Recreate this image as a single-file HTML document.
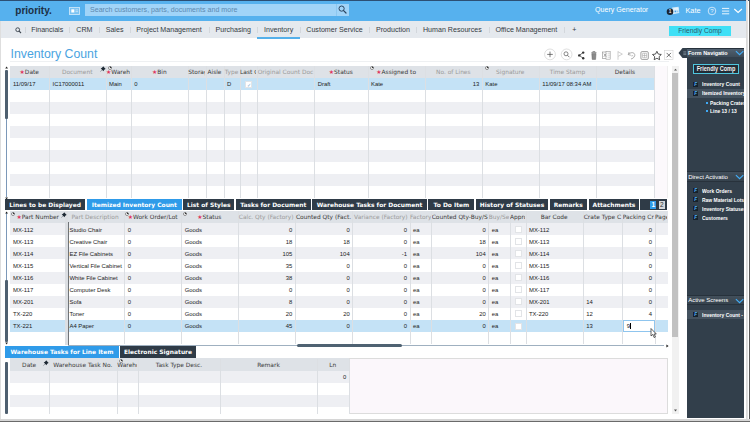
<!DOCTYPE html>
<html><head><meta charset="utf-8"><title>Inventory Count</title>
<style>
*{box-sizing:border-box;margin:0;padding:0}
html,body{width:750px;height:422px;overflow:hidden;background:#fff;font-family:"Liberation Sans",sans-serif;}
body{position:relative}
.a{position:absolute}
.navi{position:absolute;top:25px;font-size:7.1px;color:#343b43;white-space:nowrap;line-height:10px}
.sep{position:absolute;top:27px;width:1px;height:5.8px;background:#d3d7dc}
.th{position:absolute;font-family:"DejaVu Sans",sans-serif;font-size:5.9px;line-height:12px;height:12px;white-space:nowrap;overflow:hidden;text-align:center;color:#3a3a3a}
.th.g{color:#9a9a9a}
.th i{font-style:normal;color:#e0345c}
.td{position:absolute;font-size:5.9px;line-height:12px;height:12px;color:#1c1c1c;white-space:nowrap;overflow:hidden;padding:0 3px}
.td.r{text-align:right;padding-right:2px}
.row{position:absolute;height:12px}
.vl{position:absolute;width:1px;background:#dcdfe3}
.tab{position:absolute;font-family:"DejaVu Sans",sans-serif;font-weight:bold;font-size:5.95px;line-height:10.5px;height:10.5px;color:#fff;background:#2f3b47;white-space:nowrap;text-align:center;overflow:hidden}
.tab.on{background:#2f9be9}
.pn{position:absolute;font-size:5.5px;line-height:8px;color:#fff;white-space:nowrap;font-weight:bold;overflow:hidden;transform:scaleX(0.9);transform-origin:0 0}
.ph{position:absolute;left:687px;width:57px;height:9.5px;background:linear-gradient(#506070,#3e4c59);border-top:0.6px solid #27323c;color:#fff;font-size:6.5px;line-height:9.5px;font-weight:bold;white-space:nowrap;overflow:hidden}
.ph span{display:block;transform-origin:0 0;padding-left:1.2px}
.fi{position:absolute;width:5px;height:5px;background:#18222c;border:0.4px solid #3a4c5e;color:#5fb4f0;font-size:4px;line-height:4px;font-weight:bold;font-style:italic;text-align:center}
.cb{position:absolute;width:7px;height:7px;border:0.6px solid #e2e4e7;background:#fff}
</style></head><body>
<div class="a" style="left:0;top:0;width:746px;height:21px;background:#56b1ee"></div>
<div class="a" style="left:0;top:0;width:750px;height:1px;background:#2c4f74"></div>
<div class="a" style="left:0;top:21px;width:746px;height:17px;background:#e5e9ee"></div>
<div class="a" style="left:745.8px;top:0;width:2px;height:422px;background:linear-gradient(90deg,#e6e6e6,#cfcfcf,#f4f4f4)"></div>
<div class="a" style="left:748.8px;top:0;width:2px;height:422px;background:#5a5a5a"></div>
<div class="a" style="left:0;top:21px;width:0.7px;height:400px;background:#dedede"></div>
<div class="a" style="left:0;top:419px;width:750px;height:1.5px;background:#d6d6d6"></div>
<div class="a" style="left:0;top:420.5px;width:750px;height:2px;background:#6a6a6a"></div>
<div class="a" style="left:15.3px;top:3.6px;font-size:10px;line-height:14px;font-weight:bold;color:#1c2f44">priority.</div>
<svg class="a" style="left:69px;top:7px" width="11" height="8" viewBox="0 0 11 8"><rect x="0.5" y="0.5" width="10" height="7" fill="#7cc3f2" stroke="#c9e6fa" stroke-width="0.9"/><rect x="2.3" y="2.3" width="3" height="3.2" fill="#fff"/><rect x="6.5" y="2.5" width="2.5" height="0.8" fill="#cfe8fa"/><rect x="6.5" y="4.3" width="2.5" height="0.8" fill="#cfe8fa"/></svg>
<div class="a" style="left:84.6px;top:3.7px;width:264.4px;height:12.5px;background:#a1d4f8"></div>
<div class="a" style="left:335.5px;top:3.5px;width:1px;height:12.5px;background:#8cc7f0"></div>
<div class="a" style="left:90px;top:4px;font-size:7.1px;line-height:12px;color:#5d89b0;white-space:nowrap">Search customers, parts, documents and more</div>
<svg class="a" style="left:338px;top:5px" width="9" height="9" viewBox="0 0 9 9"><circle cx="3.6" cy="3.6" r="2.6" fill="none" stroke="#2b4560" stroke-width="1"/><path d="M5.6 5.6L8 8" stroke="#2b4560" stroke-width="1.2" stroke-linecap="round"/></svg>
<div class="a" style="left:595px;top:5px;font-size:7.1px;line-height:10px;color:#fff;white-space:nowrap">Query Generator</div>
<div class="a" style="left:685.5px;top:6px;font-size:7.3px;line-height:10px;color:#fff;white-space:nowrap">Kate</div>
<svg class="a" style="left:665px;top:5px" width="16" height="11" viewBox="665 5 16 11"><path d="M672.2 7.6L678.6 6.7L679.3 13L673 14.3Z" fill="#d2ebfb"/><rect x="674" y="8.4" width="4.4" height="1" fill="#f2f9fe"/><rect x="674.6" y="10.6" width="1.6" height="1.6" fill="#3f9ee6"/><rect x="676.8" y="10.6" width="1.6" height="1.6" fill="#8cc8f3"/><circle cx="670" cy="11.7" r="3.3" fill="#1b2530"/><text x="670" y="13.4" font-size="4.6" font-weight="bold" fill="#e8e8f0" text-anchor="middle" font-family="Liberation Sans, sans-serif">1</text></svg>
<svg class="a" style="left:706px;top:5px" width="40" height="12" viewBox="0 0 40 12"><circle cx="6" cy="6" r="3.8" fill="none" stroke="#e6f3fd" stroke-width="0.8"/><text x="6" y="8.1" font-size="6" fill="#e6f3fd" text-anchor="middle" font-family="Liberation Sans, sans-serif">?</text><path d="M16 3.4h7.2M16 6.1h7.2M16 8.8h7.2" stroke="#eaf5fd" stroke-width="1"/><path d="M28.3 4l3.8 3.4l3.8-3.4" fill="none" stroke="#fff" stroke-width="1.1"/></svg>
<svg class="a" style="left:14.5px;top:27.2px" width="7" height="7" viewBox="0 0 7 7"><circle cx="2.7" cy="2.7" r="1.9" fill="none" stroke="#3d4650" stroke-width="0.95"/><path d="M4.1 4.1L6 6" stroke="#3d4650" stroke-width="1.1"/></svg>
<div class="navi" style="left:31.3px">Financials</div>
<div class="navi" style="left:76.3px">CRM</div>
<div class="navi" style="left:105.7px">Sales</div>
<div class="navi" style="left:136.3px">Project Management</div>
<div class="navi" style="left:215.5px">Purchasing</div>
<div class="navi" style="left:264px">Inventory</div>
<div class="navi" style="left:306.3px">Customer Service</div>
<div class="navi" style="left:376px">Production</div>
<div class="navi" style="left:423px">Human Resources</div>
<div class="navi" style="left:495.5px">Office Management</div>
<div class="navi" style="left:572.3px">+</div>
<div class="sep" style="left:25.3px"></div>
<div class="sep" style="left:69.3px"></div>
<div class="sep" style="left:99px"></div>
<div class="sep" style="left:129.7px"></div>
<div class="sep" style="left:209px"></div>
<div class="sep" style="left:257px"></div>
<div class="sep" style="left:299.7px"></div>
<div class="sep" style="left:369.3px"></div>
<div class="sep" style="left:416.3px"></div>
<div class="sep" style="left:488.7px"></div>
<div class="sep" style="left:563.7px"></div>
<div class="a" style="left:257.3px;top:37px;width:42.5px;height:1.5px;background:#55b0ea"></div>
<div class="a" style="left:669px;top:25.5px;width:62px;height:10.5px;background:#3fe0f6;color:#2c5a6a;font-size:6.7px;line-height:10.5px;text-align:center">Friendly Comp</div>
<div class="a" style="left:10.5px;top:45px;font-size:12.3px;line-height:18px;color:#4aa3df;white-space:nowrap">Inventory Count</div>
<svg class="a" style="left:540px;top:46px" width="140" height="17" viewBox="540 46 140 17"><circle cx="550" cy="54.4" r="5.4" fill="#fff" stroke="#c9c9c9" stroke-width="0.6"/><path d="M547.2 54.4h5.6M550 51.6v5.6" stroke="#444" stroke-width="0.7"/><circle cx="566.6" cy="54.4" r="5.4" fill="#fff" stroke="#c9c9c9" stroke-width="0.6"/><circle cx="566" cy="53.8" r="2" fill="none" stroke="#555" stroke-width="0.7"/><path d="M567.5 55.3l1.9 1.9" stroke="#555" stroke-width="0.8"/><path d="M583 52.6L579.3 55.4L583 58.2" fill="none" stroke="#333" stroke-width="0.7"/><circle cx="583.2" cy="52.6" r="1.2" fill="#333"/><circle cx="579.2" cy="55.4" r="1.2" fill="#333"/><circle cx="583.2" cy="58.2" r="1.2" fill="#333"/><path d="M591.3 52.7h5.2M592.8 52.5v-0.9h2.2v0.9" fill="none" stroke="#666" stroke-width="0.7"/><path d="M591.8 53.6h4.2l-0.4 5.8h-3.4z" fill="#8a8a8a" stroke="#666" stroke-width="0.5"/><rect x="602.6" y="52" width="5" height="6.4" fill="#fff" stroke="#8a8a8a" stroke-width="0.6"/><rect x="606" y="51.4" width="4.2" height="7.8" fill="#fff" stroke="#9a9a9a" stroke-width="0.6"/><path d="M603.8 53.6l2.4 3.2M606.2 53.6l-2.4 3.2" stroke="#777" stroke-width="0.6"/><path d="M607.6 53.2h2.4M607.6 55.2h2.4M607.6 57.2h2.4" stroke="#aaa" stroke-width="0.5"/><path d="M618 51.2v8.6M618 51.8l4.4 2.3l-4.4 2.3" fill="none" stroke="#bdbdbd" stroke-width="0.7"/><path d="M629.2 52l-1 2.6l2.6 0.6" fill="none" stroke="#888" stroke-width="0.7"/><path d="M628.6 54.4c1.6-2 4.6-2.4 5.8-0.6c1.2 1.9-0.4 4.4-3.4 5.2" fill="none" stroke="#888" stroke-width="0.7"/><path d="M631.2 56.2c0.8-1 2-0.8 2 0.2" fill="none" stroke="#999" stroke-width="0.6"/><rect x="640.9" y="51.6" width="7.4" height="7.8" rx="1.2" fill="#fff" stroke="#777" stroke-width="0.7"/><path d="M642.6 53.3h4v4.4h-4zM644.6 53.3v4.4M642.6 55.5h4" fill="none" stroke="#999" stroke-width="0.5"/><path d="M656.9 51.3l1.35 2.75l3.05 0.45l-2.2 2.15l0.5 3.05l-2.7-1.45l-2.7 1.45l0.5-3.05l-2.2-2.15l3.05-0.45z" fill="#fff" stroke="#222" stroke-width="0.75" stroke-linejoin="round"/><rect x="664.6" y="50.6" width="8.4" height="9" fill="#fff" stroke="#cfcfcf" stroke-width="0.6"/><path d="M666.6 52.9l4.4 4.4M671 52.9l-4.4 4.4" stroke="#333" stroke-width="0.7"/></svg>
<div class="a" style="left:10px;top:61.2px;width:659px;height:1px;background:#eef0f2"></div>
<div class="a" style="left:654.3px;top:65.6px;width:14px;height:132.4px;background:#fcf9fc;border-right:0.6px solid #efefef"></div>
<div class="a" style="left:10px;top:65.6px;width:644.3px;height:12.4px;background:#dee2e7"></div>
<div class="row" style="left:10px;top:78.00px;width:644.3px;height:12px;background:#c4e2f6"></div>
<div class="row" style="left:10px;top:102.00px;width:644.3px;height:12px;background:#eeeff3"></div>
<div class="row" style="left:10px;top:126.00px;width:644.3px;height:12px;background:#eeeff3"></div>
<div class="row" style="left:10px;top:150.00px;width:644.3px;height:12px;background:#eeeff3"></div>
<div class="row" style="left:10px;top:174.00px;width:644.3px;height:12px;background:#eeeff3"></div>
<div class="vl" style="left:49.0px;top:66px;height:132px"></div>
<div class="vl" style="left:105.5px;top:66px;height:132px"></div>
<div class="vl" style="left:130.8px;top:66px;height:132px"></div>
<div class="vl" style="left:187.8px;top:66px;height:132px"></div>
<div class="vl" style="left:205.5px;top:66px;height:132px"></div>
<div class="vl" style="left:223.5px;top:66px;height:132px"></div>
<div class="vl" style="left:239.5px;top:66px;height:132px"></div>
<div class="vl" style="left:256.8px;top:66px;height:132px"></div>
<div class="vl" style="left:314.2px;top:66px;height:132px"></div>
<div class="vl" style="left:367.5px;top:66px;height:132px"></div>
<div class="vl" style="left:424.8px;top:66px;height:132px"></div>
<div class="vl" style="left:481.8px;top:66px;height:132px"></div>
<div class="vl" style="left:538.8px;top:66px;height:132px"></div>
<div class="vl" style="left:596.2px;top:66px;height:132px"></div>
<div class="vl" style="left:653.8px;top:66px;height:132px"></div>
<div class="th " style="left:10px;top:66px;width:38.5px"><i>★</i>Date</div>
<div class="th g" style="left:49.5px;top:66px;width:55.5px">Document</div>
<div class="th " style="left:106px;top:66px;width:24.30000000000001px"><i>★</i>Warehouse</div>
<div class="th " style="left:131.3px;top:66px;width:56.0px"><i>★</i>Bin</div>
<div class="th " style="left:188.3px;top:66px;width:16.69999999999999px">Storage</div>
<div class="th " style="left:206px;top:66px;width:17px">Aisle</div>
<div class="th g" style="left:224px;top:66px;width:15px">Type</div>
<div class="th " style="left:240px;top:66px;width:16.30000000000001px">Last Count</div>
<div class="th g" style="left:257.3px;top:66px;width:56.39999999999998px">Original Count Doc</div>
<div class="th " style="left:314.7px;top:66px;width:52.30000000000001px"><i>★</i>Status</div>
<div class="th " style="left:368px;top:66px;width:56.30000000000001px"><i>★</i>Assigned to</div>
<div class="th g" style="left:425.3px;top:66px;width:56.0px">No. of Lines</div>
<div class="th g" style="left:482.3px;top:66px;width:55.99999999999994px">Signature</div>
<div class="th g" style="left:539.3px;top:66px;width:56.40000000000009px">Time Stamp</div>
<div class="th " style="left:596.7px;top:66px;width:56.59999999999991px">Details</div>
<div class="td" style="left:10px;top:78px;width:38.5px">11/09/17</div>
<div class="td" style="left:49.5px;top:78px;width:55.5px">IC17000011</div>
<div class="td" style="left:106px;top:78px;width:24.30000000000001px">Main</div>
<div class="td" style="left:131.3px;top:78px;width:56.0px">0</div>
<div class="td" style="left:224px;top:78px;width:15px">D</div>
<div class="td" style="left:314.7px;top:78px;width:52.30000000000001px">Draft</div>
<div class="td" style="left:368px;top:78px;width:56.30000000000001px">Kate</div>
<div class="td r" style="left:425.3px;top:78px;width:56.0px">13</div>
<div class="td" style="left:482.3px;top:78px;width:55.99999999999994px">Kate</div>
<div class="td" style="left:539.3px;top:78px;width:56.40000000000009px">11/09/17 08:34 AM</div>
<div class="cb" style="left:245px;top:80.5px;color:#7aa7d0;font-size:5px;line-height:6px;text-align:center">✓</div>
<div class="a" style="left:5px;top:70px;width:2.7px;height:49px;background:#4f6070;border-radius:1px"></div>
<div class="a" style="left:6px;top:119px;width:0.8px;height:78px;background:#7c98b8"></div>
<div class="tab" style="left:5.3px;top:199px;width:79.7px;height:11px;line-height:11px">Lines to be Displayed</div>
<div class="tab on" style="left:86.7px;top:199px;width:95.3px;height:11px;line-height:11px">Itemized Inventory Count</div>
<div class="tab" style="left:183.2px;top:199px;width:51.20000000000002px;height:11px;line-height:11px">List of Styles</div>
<div class="tab" style="left:235.8px;top:199px;width:74.80000000000001px;height:11px;line-height:11px">Tasks for Document</div>
<div class="tab" style="left:312.4px;top:199px;width:114.20000000000005px;height:11px;line-height:11px">Warehouse Tasks for Document</div>
<div class="tab" style="left:428.4px;top:199px;width:46.0px;height:11px;line-height:11px">To Do Item</div>
<div class="tab" style="left:476px;top:199px;width:72px;height:11px;line-height:11px">History of Statuses</div>
<div class="tab" style="left:549.6px;top:199px;width:37.299999999999955px;height:11px;line-height:11px">Remarks</div>
<div class="tab" style="left:588.9px;top:199px;width:50.200000000000045px;height:11px;line-height:11px">Attachments</div>
<div class="a" style="left:640.4px;top:199px;width:26.4px;height:11px;background:#2f3b47"></div>
<div class="a" style="left:650px;top:200.6px;width:6.4px;height:8px;background:#2f9be9;color:#fff;font-size:6.5px;line-height:8px;text-align:center;font-weight:bold">1</div>
<div class="a" style="left:658.5px;top:200.6px;width:6.7px;height:8px;background:#d5d8db;color:#333;font-size:6.5px;line-height:8px;text-align:center">2</div>
<div class="a" style="left:10px;top:210.7px;width:658.3px;height:12.6px;background:#dee2e7"></div>
<div class="row" style="left:10px;top:223.30px;width:658.3px;height:12.05px;background:#eeeff3"></div>
<div class="row" style="left:10px;top:247.40px;width:658.3px;height:12.05px;background:#eeeff3"></div>
<div class="row" style="left:10px;top:271.50px;width:658.3px;height:12.05px;background:#eeeff3"></div>
<div class="row" style="left:10px;top:295.60px;width:658.3px;height:12.05px;background:#eeeff3"></div>
<div class="row" style="left:10px;top:319.70px;width:658.3px;height:12.05px;background:#c4e2f6"></div>
<div class="vl" style="left:124.2px;top:211px;height:133px"></div>
<div class="vl" style="left:181.2px;top:211px;height:133px"></div>
<div class="vl" style="left:237.5px;top:211px;height:133px"></div>
<div class="vl" style="left:294.8px;top:211px;height:133px"></div>
<div class="vl" style="left:352.2px;top:211px;height:133px"></div>
<div class="vl" style="left:409.5px;top:211px;height:133px"></div>
<div class="vl" style="left:431.2px;top:211px;height:133px"></div>
<div class="vl" style="left:488.2px;top:211px;height:133px"></div>
<div class="vl" style="left:509.5px;top:211px;height:133px"></div>
<div class="vl" style="left:525.5px;top:211px;height:133px"></div>
<div class="vl" style="left:582.8px;top:211px;height:133px"></div>
<div class="vl" style="left:622.2px;top:211px;height:133px"></div>
<div class="vl" style="left:654.5px;top:211px;height:133px"></div>
<div class="a" style="left:65.3px;top:210.7px;width:2.4px;height:134.6px;background:#dcdfe3"></div>
<div class="a" style="left:67.5px;top:222px;width:1px;height:123.3px;background:#707478"></div>
<div class="th " style="left:10px;top:211.2px;width:55.5px"><i>★</i>Part Number</div>
<div class="th g" style="left:66.5px;top:211.2px;width:57.2px">Part Description</div>
<div class="th " style="left:124.7px;top:211.2px;width:55.999999999999986px"><i>★</i>Work Order/Lot</div>
<div class="th " style="left:181.7px;top:211.2px;width:55.30000000000001px"><i>★</i>Status</div>
<div class="th g" style="left:238px;top:211.2px;width:56.30000000000001px">Calc. Qty (Factory)</div>
<div class="th " style="left:295.3px;top:211.2px;width:56.39999999999998px">Counted Qty (Fact.</div>
<div class="th g" style="left:352.7px;top:211.2px;width:56.30000000000001px">Variance (Factory)</div>
<div class="th g" style="left:410px;top:211.2px;width:20.69999999999999px">Factory</div>
<div class="th " style="left:431.7px;top:211.2px;width:56.0px">Counted Qty-Buy/S</div>
<div class="th g" style="left:488.7px;top:211.2px;width:20.30000000000001px">Buy/Se</div>
<div class="th " style="left:510px;top:211.2px;width:15px">Appro</div>
<div class="th " style="left:526px;top:211.2px;width:56.299999999999955px">Bar Code</div>
<div class="th " style="left:583.3px;top:211.2px;width:38.40000000000009px">Crate Type C</div>
<div class="th " style="left:622.7px;top:211.2px;width:31.299999999999955px">Packing Cr</div>
<div class="th " style="left:655px;top:211.2px;width:12.299999999999955px">Page</div>
<div class="td" style="left:10px;top:223.60px;width:55.5px">MX-112</div>
<div class="td" style="left:66.5px;top:223.60px;width:57.2px">Studio Chair</div>
<div class="td" style="left:124.7px;top:223.60px;width:55.999999999999986px">0</div>
<div class="td" style="left:181.7px;top:223.60px;width:55.30000000000001px">Goods</div>
<div class="td r" style="left:238px;top:223.60px;width:56.30000000000001px">0</div>
<div class="td r" style="left:295.3px;top:223.60px;width:56.39999999999998px">0</div>
<div class="td r" style="left:352.7px;top:223.60px;width:56.30000000000001px">0</div>
<div class="td" style="left:410px;top:223.60px;width:20.69999999999999px">ea</div>
<div class="td r" style="left:431.7px;top:223.60px;width:56.0px">0</div>
<div class="td" style="left:488.7px;top:223.60px;width:20.30000000000001px">ea</div>
<div class="cb" style="left:514.5px;top:226.10px"></div>
<div class="td" style="left:526px;top:223.60px;width:56.299999999999955px">MX-112</div>
<div class="td r" style="left:622.7px;top:223.60px;width:31.299999999999955px">0</div>
<div class="td" style="left:10px;top:235.65px;width:55.5px">MX-113</div>
<div class="td" style="left:66.5px;top:235.65px;width:57.2px">Creative Chair</div>
<div class="td" style="left:124.7px;top:235.65px;width:55.999999999999986px">0</div>
<div class="td" style="left:181.7px;top:235.65px;width:55.30000000000001px">Goods</div>
<div class="td r" style="left:238px;top:235.65px;width:56.30000000000001px">18</div>
<div class="td r" style="left:295.3px;top:235.65px;width:56.39999999999998px">18</div>
<div class="td r" style="left:352.7px;top:235.65px;width:56.30000000000001px">0</div>
<div class="td" style="left:410px;top:235.65px;width:20.69999999999999px">ea</div>
<div class="td r" style="left:431.7px;top:235.65px;width:56.0px">18</div>
<div class="td" style="left:488.7px;top:235.65px;width:20.30000000000001px">ea</div>
<div class="cb" style="left:514.5px;top:238.15px"></div>
<div class="td" style="left:526px;top:235.65px;width:56.299999999999955px">MX-113</div>
<div class="td r" style="left:622.7px;top:235.65px;width:31.299999999999955px">0</div>
<div class="td" style="left:10px;top:247.70px;width:55.5px">MX-114</div>
<div class="td" style="left:66.5px;top:247.70px;width:57.2px">EZ File Cabinets</div>
<div class="td" style="left:124.7px;top:247.70px;width:55.999999999999986px">0</div>
<div class="td" style="left:181.7px;top:247.70px;width:55.30000000000001px">Goods</div>
<div class="td r" style="left:238px;top:247.70px;width:56.30000000000001px">105</div>
<div class="td r" style="left:295.3px;top:247.70px;width:56.39999999999998px">104</div>
<div class="td r" style="left:352.7px;top:247.70px;width:56.30000000000001px">-1</div>
<div class="td" style="left:410px;top:247.70px;width:20.69999999999999px">ea</div>
<div class="td r" style="left:431.7px;top:247.70px;width:56.0px">104</div>
<div class="td" style="left:488.7px;top:247.70px;width:20.30000000000001px">ea</div>
<div class="cb" style="left:514.5px;top:250.20px"></div>
<div class="td" style="left:526px;top:247.70px;width:56.299999999999955px">MX-114</div>
<div class="td r" style="left:622.7px;top:247.70px;width:31.299999999999955px">0</div>
<div class="td" style="left:10px;top:259.75px;width:55.5px">MX-115</div>
<div class="td" style="left:66.5px;top:259.75px;width:57.2px">Vertical File Cabinet</div>
<div class="td" style="left:124.7px;top:259.75px;width:55.999999999999986px">0</div>
<div class="td" style="left:181.7px;top:259.75px;width:55.30000000000001px">Goods</div>
<div class="td r" style="left:238px;top:259.75px;width:56.30000000000001px">35</div>
<div class="td r" style="left:295.3px;top:259.75px;width:56.39999999999998px">0</div>
<div class="td r" style="left:352.7px;top:259.75px;width:56.30000000000001px">0</div>
<div class="td" style="left:410px;top:259.75px;width:20.69999999999999px">ea</div>
<div class="td r" style="left:431.7px;top:259.75px;width:56.0px">0</div>
<div class="td" style="left:488.7px;top:259.75px;width:20.30000000000001px">ea</div>
<div class="cb" style="left:514.5px;top:262.25px"></div>
<div class="td" style="left:526px;top:259.75px;width:56.299999999999955px">MX-115</div>
<div class="td r" style="left:622.7px;top:259.75px;width:31.299999999999955px">0</div>
<div class="td" style="left:10px;top:271.80px;width:55.5px">MX-116</div>
<div class="td" style="left:66.5px;top:271.80px;width:57.2px">White File Cabinet</div>
<div class="td" style="left:124.7px;top:271.80px;width:55.999999999999986px">0</div>
<div class="td" style="left:181.7px;top:271.80px;width:55.30000000000001px">Goods</div>
<div class="td r" style="left:238px;top:271.80px;width:56.30000000000001px">38</div>
<div class="td r" style="left:295.3px;top:271.80px;width:56.39999999999998px">0</div>
<div class="td r" style="left:352.7px;top:271.80px;width:56.30000000000001px">0</div>
<div class="td" style="left:410px;top:271.80px;width:20.69999999999999px">ea</div>
<div class="td r" style="left:431.7px;top:271.80px;width:56.0px">0</div>
<div class="td" style="left:488.7px;top:271.80px;width:20.30000000000001px">ea</div>
<div class="cb" style="left:514.5px;top:274.30px"></div>
<div class="td" style="left:526px;top:271.80px;width:56.299999999999955px">MX-116</div>
<div class="td r" style="left:622.7px;top:271.80px;width:31.299999999999955px">0</div>
<div class="td" style="left:10px;top:283.85px;width:55.5px">MX-117</div>
<div class="td" style="left:66.5px;top:283.85px;width:57.2px">Computer Desk</div>
<div class="td" style="left:124.7px;top:283.85px;width:55.999999999999986px">0</div>
<div class="td" style="left:181.7px;top:283.85px;width:55.30000000000001px">Goods</div>
<div class="td r" style="left:238px;top:283.85px;width:56.30000000000001px">0</div>
<div class="td r" style="left:295.3px;top:283.85px;width:56.39999999999998px">0</div>
<div class="td r" style="left:352.7px;top:283.85px;width:56.30000000000001px">0</div>
<div class="td" style="left:410px;top:283.85px;width:20.69999999999999px">ea</div>
<div class="td r" style="left:431.7px;top:283.85px;width:56.0px">0</div>
<div class="td" style="left:488.7px;top:283.85px;width:20.30000000000001px">ea</div>
<div class="cb" style="left:514.5px;top:286.35px"></div>
<div class="td" style="left:526px;top:283.85px;width:56.299999999999955px">MX-117</div>
<div class="td r" style="left:622.7px;top:283.85px;width:31.299999999999955px">0</div>
<div class="td" style="left:10px;top:295.90px;width:55.5px">MX-201</div>
<div class="td" style="left:66.5px;top:295.90px;width:57.2px">Sofa</div>
<div class="td" style="left:124.7px;top:295.90px;width:55.999999999999986px">0</div>
<div class="td" style="left:181.7px;top:295.90px;width:55.30000000000001px">Goods</div>
<div class="td r" style="left:238px;top:295.90px;width:56.30000000000001px">8</div>
<div class="td r" style="left:295.3px;top:295.90px;width:56.39999999999998px">0</div>
<div class="td r" style="left:352.7px;top:295.90px;width:56.30000000000001px">0</div>
<div class="td" style="left:410px;top:295.90px;width:20.69999999999999px">ea</div>
<div class="td r" style="left:431.7px;top:295.90px;width:56.0px">0</div>
<div class="td" style="left:488.7px;top:295.90px;width:20.30000000000001px">ea</div>
<div class="cb" style="left:514.5px;top:298.40px"></div>
<div class="td" style="left:526px;top:295.90px;width:56.299999999999955px">MX-201</div>
<div class="td" style="left:583.3px;top:295.90px;width:38.40000000000009px">14</div>
<div class="td r" style="left:622.7px;top:295.90px;width:31.299999999999955px">0</div>
<div class="td" style="left:10px;top:307.95px;width:55.5px">TX-220</div>
<div class="td" style="left:66.5px;top:307.95px;width:57.2px">Toner</div>
<div class="td" style="left:124.7px;top:307.95px;width:55.999999999999986px">0</div>
<div class="td" style="left:181.7px;top:307.95px;width:55.30000000000001px">Goods</div>
<div class="td r" style="left:238px;top:307.95px;width:56.30000000000001px">20</div>
<div class="td r" style="left:295.3px;top:307.95px;width:56.39999999999998px">20</div>
<div class="td r" style="left:352.7px;top:307.95px;width:56.30000000000001px">0</div>
<div class="td" style="left:410px;top:307.95px;width:20.69999999999999px">ea</div>
<div class="td r" style="left:431.7px;top:307.95px;width:56.0px">20</div>
<div class="td" style="left:488.7px;top:307.95px;width:20.30000000000001px">ea</div>
<div class="cb" style="left:514.5px;top:310.45px"></div>
<div class="td" style="left:526px;top:307.95px;width:56.299999999999955px">TX-220</div>
<div class="td" style="left:583.3px;top:307.95px;width:38.40000000000009px">12</div>
<div class="td r" style="left:622.7px;top:307.95px;width:31.299999999999955px">4</div>
<div class="td" style="left:10px;top:320.00px;width:55.5px">TX-221</div>
<div class="td" style="left:66.5px;top:320.00px;width:57.2px">A4 Paper</div>
<div class="td" style="left:124.7px;top:320.00px;width:55.999999999999986px">0</div>
<div class="td" style="left:181.7px;top:320.00px;width:55.30000000000001px">Goods</div>
<div class="td r" style="left:238px;top:320.00px;width:56.30000000000001px">45</div>
<div class="td r" style="left:295.3px;top:320.00px;width:56.39999999999998px">0</div>
<div class="td r" style="left:352.7px;top:320.00px;width:56.30000000000001px">0</div>
<div class="td" style="left:410px;top:320.00px;width:20.69999999999999px">ea</div>
<div class="td r" style="left:431.7px;top:320.00px;width:56.0px">0</div>
<div class="td" style="left:488.7px;top:320.00px;width:20.30000000000001px">ea</div>
<div class="cb" style="left:514.5px;top:322.50px"></div>
<div class="td" style="left:583.3px;top:320.00px;width:38.40000000000009px">13</div>
<div class="a" style="left:623px;top:320px;width:31.7px;height:11.7px;background:#fff;border:0.7px solid #8fc5ee;font-size:6.1px;line-height:10.5px;padding-left:2.8px;color:#111">9<span style="display:inline-block;width:0.7px;height:6px;background:#000;vertical-align:-1px"></span></div>
<svg class="a" style="left:650px;top:328px" width="8" height="11" viewBox="0 0 8 11"><path d="M1 0.5L1 8L2.8 6.4L4.2 9.6L5.4 9L4 6L6.3 6Z" fill="#fff" stroke="#222" stroke-width="0.7"/></svg>
<div class="a" style="left:6px;top:212px;width:0.8px;height:75px;background:#7c98b8"></div>
<div class="a" style="left:5px;top:280px;width:2.7px;height:62px;background:#4f6070;border-radius:1px"></div>
<div class="a" style="left:68px;top:345.2px;width:596px;height:0.8px;background:#9fb0c0"></div>
<div class="a" style="left:296.7px;top:344.3px;width:105px;height:3px;background:#4f6272;border-radius:1.5px"></div>
<svg class="a" style="left:665.5px;top:343.6px" width="3" height="4" viewBox="0 0 3 4"><path d="M0.4 0.4L2.6 2L0.4 3.6Z" fill="#222"/></svg>
<div class="tab on" style="left:5.3px;top:346px;width:113.4px;height:11.7px;line-height:11.7px">Warehouse Tasks for Line Item</div>
<div class="tab" style="left:120px;top:346px;width:76px;height:11.7px;line-height:11.7px">Electronic Signature</div>
<div class="a" style="left:10px;top:357.7px;width:658.3px;height:56px;background:#fbf7fb;border:0.6px solid #dcdcdc"></div>
<div class="a" style="left:10px;top:371px;width:339.3px;height:43px;background:#fff"></div>
<div class="a" style="left:10px;top:357.7px;width:339.3px;height:13px;background:#dee2e7"></div>
<div class="row" style="left:10px;top:370.70px;width:339.3px;height:12px;background:#eeeff3"></div>
<div class="row" style="left:10px;top:394.70px;width:339.3px;height:12px;background:#eeeff3"></div>
<div class="vl" style="left:48.8px;top:359px;height:55px"></div>
<div class="vl" style="left:116.8px;top:359px;height:55px"></div>
<div class="vl" style="left:137.8px;top:359px;height:55px"></div>
<div class="vl" style="left:220.2px;top:359px;height:55px"></div>
<div class="vl" style="left:316.8px;top:359px;height:55px"></div>
<div class="vl" style="left:348.8px;top:359px;height:55px"></div>
<div class="th " style="left:10px;top:358.8px;width:38.3px">Date</div>
<div class="th " style="left:49.3px;top:358.8px;width:67.0px">Warehouse Task No.</div>
<div class="th " style="left:117.3px;top:358.8px;width:20.000000000000014px">Warehouse</div>
<div class="th " style="left:138.3px;top:358.8px;width:81.39999999999998px">Task Type Desc.</div>
<div class="th " style="left:220.7px;top:358.8px;width:95.60000000000002px">Remark</div>
<div class="th " style="left:317.3px;top:358.8px;width:31.0px">Ln</div>
<div class="td r" style="left:317.3px;top:370.80px;width:31.0px">0</div>
<div class="a" style="left:5px;top:362px;width:2.7px;height:52px;background:#4f6070;border-radius:1px"></div>
<svg class="a" style="left:99.5px;top:66.2px" width="6" height="6" viewBox="0 0 6 6"><path d="M3.1 0.3L5.7 2.9L4.9 3.2L3.9 4.3L3.6 5.3L2.2 3.9L0.4 5.7L0.3 5.6L2.1 3.8L0.7 2.4L1.7 2.1L2.8 1.1Z" fill="#1c2833"/></svg>
<svg class="a" style="left:60.5px;top:211.5px" width="6" height="6" viewBox="0 0 6 6"><path d="M3.1 0.3L5.7 2.9L4.9 3.2L3.9 4.3L3.6 5.3L2.2 3.9L0.4 5.7L0.3 5.6L2.1 3.8L0.7 2.4L1.7 2.1L2.8 1.1Z" fill="#1c2833"/></svg>
<svg class="a" style="left:42.7px;top:359.8px" width="6" height="6" viewBox="0 0 6 6"><path d="M3.1 0.3L5.7 2.9L4.9 3.2L3.9 4.3L3.6 5.3L2.2 3.9L0.4 5.7L0.3 5.6L2.1 3.8L0.7 2.4L1.7 2.1L2.8 1.1Z" fill="#1c2833"/></svg>
<svg class="a" style="left:107.7px;top:65.9px" width="4" height="4" viewBox="0 0 4 4"><circle cx="2" cy="2" r="1.5" fill="#fff" stroke="#333" stroke-width="0.5"/><path d="M2 0.5A1.5 1.5 0 0 1 3.5 2L2 2Z" fill="#333"/></svg>
<svg class="a" style="left:370.3px;top:65.9px" width="4" height="4" viewBox="0 0 4 4"><circle cx="2" cy="2" r="1.5" fill="#fff" stroke="#333" stroke-width="0.5"/><path d="M2 0.5A1.5 1.5 0 0 1 3.5 2L2 2Z" fill="#333"/></svg>
<svg class="a" style="left:484.8px;top:65.9px" width="4" height="4" viewBox="0 0 4 4"><circle cx="2" cy="2" r="1.5" fill="#fff" stroke="#333" stroke-width="0.5"/><path d="M2 0.5A1.5 1.5 0 0 1 3.5 2L2 2Z" fill="#333"/></svg>
<svg class="a" style="left:11.2px;top:212.2px" width="4" height="4" viewBox="0 0 4 4"><circle cx="2" cy="2" r="1.5" fill="#fff" stroke="#333" stroke-width="0.5"/><path d="M2 0.5A1.5 1.5 0 0 1 3.5 2L2 2Z" fill="#333"/></svg>
<svg class="a" style="left:125.3px;top:212.2px" width="4" height="4" viewBox="0 0 4 4"><circle cx="2" cy="2" r="1.5" fill="#fff" stroke="#333" stroke-width="0.5"/><path d="M2 0.5A1.5 1.5 0 0 1 3.5 2L2 2Z" fill="#333"/></svg>
<svg class="a" style="left:182.6px;top:212.2px" width="4" height="4" viewBox="0 0 4 4"><circle cx="2" cy="2" r="1.5" fill="#fff" stroke="#333" stroke-width="0.5"/><path d="M2 0.5A1.5 1.5 0 0 1 3.5 2L2 2Z" fill="#333"/></svg>
<svg class="a" style="left:118.6px;top:359.4px" width="4" height="4" viewBox="0 0 4 4"><circle cx="2" cy="2" r="1.5" fill="#fff" stroke="#333" stroke-width="0.5"/><path d="M2 0.5A1.5 1.5 0 0 1 3.5 2L2 2Z" fill="#333"/></svg>
<svg class="a" style="left:4.8px;top:65.8px" width="3.2" height="3" viewBox="0 0 3.2 3"><path d="M0.2 2.6L1.6 0.4L3 2.6Z" fill="#222"/></svg>
<svg class="a" style="left:4.8px;top:196.5px" width="3.2" height="3" viewBox="0 0 3.2 3"><path d="M0.2 0.4L1.6 2.6L3 0.4Z" fill="#222"/></svg>
<svg class="a" style="left:4.8px;top:211.2px" width="3.2" height="3" viewBox="0 0 3.2 3"><path d="M0.2 2.6L1.6 0.4L3 2.6Z" fill="#222"/></svg>
<svg class="a" style="left:4.8px;top:342px" width="3.2" height="3" viewBox="0 0 3.2 3"><path d="M0.2 0.4L1.6 2.6L3 0.4Z" fill="#222"/></svg>
<div class="a" style="left:671.6px;top:65.6px;width:7.3px;height:348px;background:#f1f1f1"></div>
<div class="a" style="left:672.4px;top:73.2px;width:5.6px;height:264px;background:#c1c1c1"></div>
<svg class="a" style="left:671.8px;top:66px" width="7" height="7" viewBox="0 0 7 7"><path d="M2 4.5L3.5 2.7L5 4.5Z" fill="#505050"/></svg>
<svg class="a" style="left:672px;top:407px" width="7" height="7" viewBox="0 0 7 7"><path d="M2 2.5L3.5 4.5L5 2.5Z" fill="#505050"/></svg>
<div class="a" style="left:687px;top:47.5px;width:57px;height:370.5px;background:#323f4b"></div>
<svg class="a" style="left:677.5px;top:47.5px" width="10" height="10" viewBox="0 0 10 10"><path d="M10 0L4.5 0L0.5 5L4.5 10L10 10Z" fill="#323f4b"/><path d="M5.3 3.8h3M5.3 5.2h3M5.3 6.6h3" stroke="#8796a4" stroke-width="0.7"/></svg>
<div class="ph" style="top:47.5px;height:9.5px;line-height:7.5px;font-size:6.2px;font-weight:bold"><span style="transform:scaleX(0.88)">Form Navigatio</span></div>
<svg class="a" style="left:735.2px;top:49.95px" width="9" height="6" viewBox="0 0 9 6"><path d="M0.9 1.1L4.6 4.6L8.3 1.1" fill="none" stroke="#42aef8" stroke-width="1.2"/></svg>
<div class="ph" style="top:171px;height:11px;line-height:9px;font-size:6.2px;background:linear-gradient(#424f5b,#36434e);border-bottom:0.6px solid #28323c;font-weight:normal"><span style="transform:scaleX(0.97)">Direct Activatio</span></div>
<svg class="a" style="left:735.2px;top:174.2px" width="9" height="6" viewBox="0 0 9 6"><path d="M0.9 1.1L4.6 4.6L8.3 1.1" fill="none" stroke="#42aef8" stroke-width="1.2"/></svg>
<div class="ph" style="top:295px;height:10px;line-height:8px;font-size:6.2px;background:linear-gradient(#424f5b,#36434e);border-bottom:0.6px solid #28323c;font-weight:normal"><span style="transform:scaleX(0.97)">Active Screens</span></div>
<svg class="a" style="left:735.2px;top:297.7px" width="9" height="6" viewBox="0 0 9 6"><path d="M0.9 1.1L4.6 4.6L8.3 1.1" fill="none" stroke="#42aef8" stroke-width="1.2"/></svg>
<div class="a" style="left:693px;top:63.8px;width:46px;height:10px;border:1px solid #4fc6de;background:#222c36;color:#f4f4f4;font-size:6.3px;line-height:8px;font-weight:bold;text-align:center;white-space:nowrap"><span style="display:inline-block;transform:scaleX(0.875)">Friendly Comp</span></div>
<div class="a" style="left:687px;top:89px;width:57px;height:9px;background:#44525f"></div>
<div class="a" style="left:687px;top:310px;width:57px;height:8.8px;background:#44525f"></div>
<svg class="a" style="left:692.6px;top:81.70px" width="5.4" height="5.4" viewBox="0 0 5.4 5.4"><rect width="5.4" height="5.4" fill="#17212b"/><text x="2.75" y="4.45" font-size="4.8" font-weight="bold" font-style="italic" fill="#4db2f7" text-anchor="middle" font-family="Liberation Sans, sans-serif">F</text></svg>
<div class="pn" style="left:702px;top:80.3px;width:47.22222222222222px">Inventory Count</div>
<svg class="a" style="left:692.6px;top:90.70px" width="5.4" height="5.4" viewBox="0 0 5.4 5.4"><rect width="5.4" height="5.4" fill="#17212b"/><text x="2.75" y="4.45" font-size="4.8" font-weight="bold" font-style="italic" fill="#4db2f7" text-anchor="middle" font-family="Liberation Sans, sans-serif">F</text></svg>
<div class="pn" style="left:702px;top:89.3px;width:47.22222222222222px">Itemized Inventory</div>
<div class="a" style="left:705.5px;top:101.5px;width:2px;height:2px;background:#3fa9f5"></div>
<div class="pn" style="left:709.7px;top:98.5px;width:38.666666666666615px">Packing Crates</div>
<div class="a" style="left:705.5px;top:110.4px;width:2px;height:2px;background:#3fa9f5"></div>
<div class="pn" style="left:709.7px;top:107.4px;width:38.666666666666615px">Line 13 / 13</div>
<svg class="a" style="left:692.6px;top:187.90px" width="5.4" height="5.4" viewBox="0 0 5.4 5.4"><rect width="5.4" height="5.4" fill="#17212b"/><text x="2.75" y="4.45" font-size="4.8" font-weight="bold" font-style="italic" fill="#4db2f7" text-anchor="middle" font-family="Liberation Sans, sans-serif">F</text></svg>
<div class="pn" style="left:702px;top:186.5px;width:47.22222222222222px">Work Orders</div>
<svg class="a" style="left:692.6px;top:197.10px" width="5.4" height="5.4" viewBox="0 0 5.4 5.4"><rect width="5.4" height="5.4" fill="#17212b"/><text x="2.75" y="4.45" font-size="4.8" font-weight="bold" font-style="italic" fill="#4db2f7" text-anchor="middle" font-family="Liberation Sans, sans-serif">F</text></svg>
<div class="pn" style="left:702px;top:195.7px;width:47.22222222222222px">Raw Material Lots</div>
<svg class="a" style="left:692.6px;top:206.00px" width="5.4" height="5.4" viewBox="0 0 5.4 5.4"><rect width="5.4" height="5.4" fill="#17212b"/><text x="2.75" y="4.45" font-size="4.8" font-weight="bold" font-style="italic" fill="#4db2f7" text-anchor="middle" font-family="Liberation Sans, sans-serif">F</text></svg>
<div class="pn" style="left:702px;top:204.6px;width:47.22222222222222px">Inventory Statuses</div>
<svg class="a" style="left:692.6px;top:215.00px" width="5.4" height="5.4" viewBox="0 0 5.4 5.4"><rect width="5.4" height="5.4" fill="#17212b"/><text x="2.75" y="4.45" font-size="4.8" font-weight="bold" font-style="italic" fill="#4db2f7" text-anchor="middle" font-family="Liberation Sans, sans-serif">F</text></svg>
<div class="pn" style="left:702px;top:213.6px;width:47.22222222222222px">Customers</div>
<svg class="a" style="left:692.6px;top:312.10px" width="5.4" height="5.4" viewBox="0 0 5.4 5.4"><rect width="5.4" height="5.4" fill="#17212b"/><text x="2.75" y="4.45" font-size="4.8" font-weight="bold" font-style="italic" fill="#4db2f7" text-anchor="middle" font-family="Liberation Sans, sans-serif">F</text></svg>
<div class="pn" style="left:702px;top:310.7px;width:47.22222222222222px">Inventory Count - </div>
</body></html>
